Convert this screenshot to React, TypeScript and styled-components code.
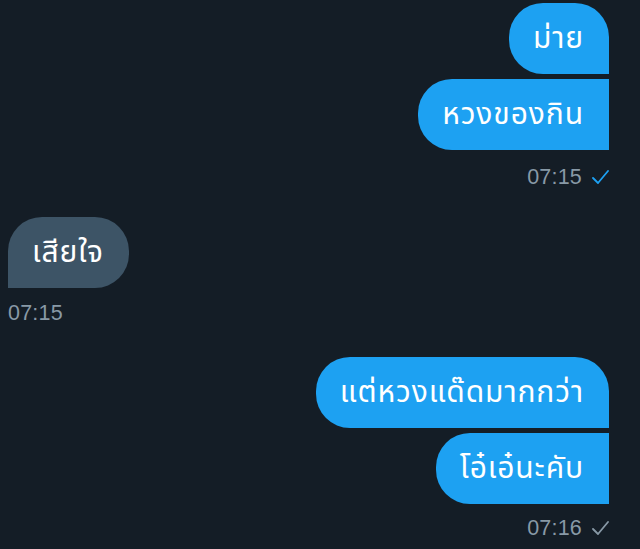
import React from "react";
import styled, { createGlobalStyle } from "styled-components";

const Global = createGlobalStyle`
  html, body { margin: 0; padding: 0; background: #141d26; }
  body { width: 640px; height: 549px; overflow: hidden; }
`;

const Page = styled.div`
  box-sizing: border-box;
  width: 640px;
  height: 549px;
  padding: 3px 31px 0 8px;
  display: flex;
  flex-direction: column;
  background: #141d26;
  font-family: "Noto Sans", "Noto Sans Thai", "Liberation Sans", sans-serif;
`;

const Group = styled.div<{ $side: "left" | "right"; $top: number }>`
  display: flex;
  flex-direction: column;
  align-items: ${(p) => (p.$side === "right" ? "flex-end" : "flex-start")};
  gap: 5px;
  margin-top: ${(p) => p.$top}px;
`;

type Corners = { tl: number; tr: number; br: number; bl: number };

const Bubble = styled.div<{ $mine: boolean; $c: Corners }>`
  box-sizing: border-box;
  height: 71px;
  padding: 0 25px 0 24px;
  display: flex;
  align-items: center;
  color: #ffffff;
  font-size: 30px;
  letter-spacing: 0.9px;
  white-space: nowrap;
  background: ${(p) => (p.$mine ? "#1da1f2" : "#3d5466")};
  border-radius: ${(p) => `${p.$c.tl}px ${p.$c.tr}px ${p.$c.br}px ${p.$c.bl}px`};
`;

const Meta = styled.div<{ $top: number }>`
  display: flex;
  align-items: center;
  gap: 10px;
  margin-top: ${(p) => p.$top}px;
  height: 24px;
  font-family: "Liberation Sans", Arial, sans-serif;
  font-size: 21.5px;
  letter-spacing: 0.2px;
  color: #8899a6;
`;

const Check = ({ color }: { color: string }) => (
  <svg width="17" height="14" viewBox="0 0 17 14" fill="none">
    <path d="M1 8 L6 13 L16 1" stroke={color} strokeWidth="1.8" strokeLinecap="round" strokeLinejoin="round" />
  </svg>
);

const R = 34;

export default function App() {
  return (
    <>
      <Global />
      <Page>
        <Group $side="right" $top={0}>
          <Bubble $mine $c={{ tl: R, tr: R, br: 0, bl: R }}>ม่าย</Bubble>
          <Bubble $mine $c={{ tl: R, tr: 0, br: 0, bl: R }}>หวงของกิน</Bubble>
          <Meta $top={10}>
            07:15 <Check color="#1da1f2" />
          </Meta>
        </Group>
        <Group $side="left" $top={28}>
          <Bubble $mine={false} $c={{ tl: R, tr: R, br: R, bl: 0 }}>เสียใจ</Bubble>
          <Meta $top={8}>07:15</Meta>
        </Group>
        <Group $side="right" $top={32}>
          <Bubble $mine $c={{ tl: R, tr: R, br: 0, bl: R }}>แต่หวงแด๊ดมากกว่า</Bubble>
          <Bubble $mine $c={{ tl: R, tr: 0, br: 0, bl: R }}>โอ๋เอ๋นะคับ</Bubble>
          <Meta $top={7}>
            07:16 <Check color="#8899a6" />
          </Meta>
        </Group>
      </Page>
    </>
  );
}
